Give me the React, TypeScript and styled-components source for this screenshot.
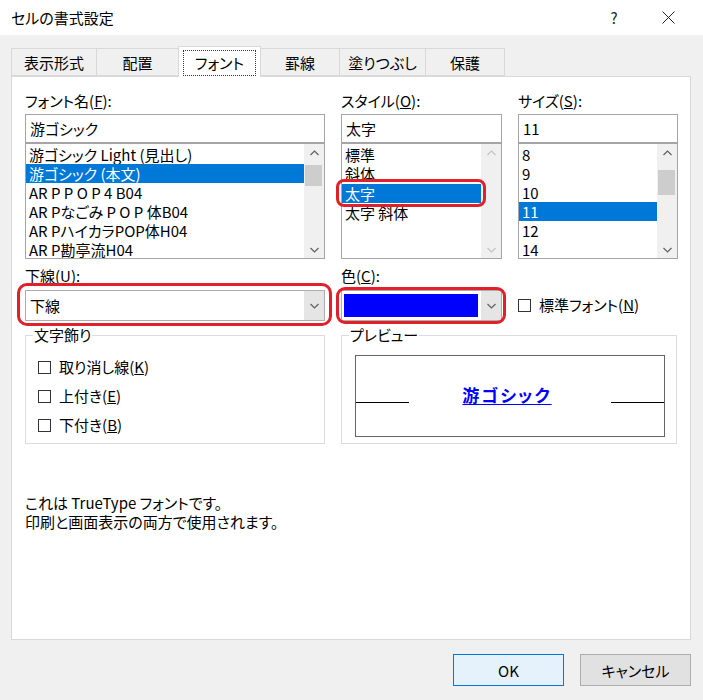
import styled, { createGlobalStyle } from 'styled-components';

const GlobalStyle = createGlobalStyle`
  html, body {
    margin: 0;
    padding: 0;
    background: #f0f0f0;
  }
  body {
    font-family: "Noto Sans CJK JP", "Noto Sans", sans-serif;
    font-feature-settings: "palt";
    font-size: 15px;
    color: #000;
  }
`

const Window = styled.div`
  width: 703px;
  height: 700px;
  display: flex;
  flex-direction: column;
  background: #f0f0f0;
  overflow: hidden;
`

const TitleBar = styled.div`
  height: 35px;
  background: #fff;
  display: flex;
  align-items: center;
  padding: 0 8px 0 11px;
`

const TitleText = styled.div`
  flex: 1;
  font-size: 15px;
  line-height: 20px;
`

const TitleButton = styled.div`
  width: 54px;
  height: 35px;
  display: flex;
  align-items: center;
  justify-content: center;
  font-size: 15px;
  color: #222;
`

const Body = styled.div`
  padding: 11px 12px 0 11px;
  display: flex;
  flex-direction: column;
`

const TabStrip = styled.div`
  display: flex;
  align-items: flex-end;
  height: 30px;
  padding-left: 1px;
`

const Tab = styled.div<{ $w: number; $active?: boolean }>`
  width: ${p => p.$w}px;
  height: ${p => (p.$active ? 31 : 28)}px;
  margin-left: -1px;
  margin-bottom: ${p => (p.$active ? -1 : 0)}px;
  box-sizing: border-box;
  border: 1px solid #d9d9d9;
  border-bottom: ${p => (p.$active ? 'none' : '1px solid #d9d9d9')};
  background: ${p => (p.$active ? '#fff' : '#f0f0f0')};
  position: relative;
  z-index: ${p => (p.$active ? 2 : 1)};
  display: flex;
  align-items: center;
  justify-content: center;
  font-size: 15px;
  line-height: 20px;
  padding-top: ${p => (p.$active ? 0 : 1)}px;
`

const FocusRect = styled.span`
  border: 1px dotted #333;
  padding: 2px 11px;
  margin-top: 2px;
`

const Panel = styled.div`
  height: 564px;
  box-sizing: border-box;
  background: #fff;
  border: 1px solid #d9d9d9;
  padding: 14px 11px 0 13px;
  display: flex;
  flex-direction: column;
`

const FontGrid = styled.div`
  display: grid;
  grid-template-columns: 300px 161px 160px;
  column-gap: 16px;
`

const Column = styled.div`
  display: flex;
  flex-direction: column;
`

const Label = styled.div`
  height: 20px;
  line-height: 20px;
  font-size: 15px;
  margin-bottom: 3px;
  white-space: nowrap;
`

const TextBox = styled.div`
  height: 29px;
  box-sizing: border-box;
  border: 1px solid #a5a5a5;
  padding: 0 4px;
  line-height: 27px;
  font-size: 15px;
`

const ListBox = styled.div`
  height: 116px;
  box-sizing: border-box;
  border: 1px solid #a5a5a5;
  display: flex;
`

const ListItems = styled.div`
  flex: 1;
  padding-top: 1px;
  display: flex;
  flex-direction: column;
`

const ListItem = styled.div<{ $selected?: boolean }>`
  height: 19.3px;
  line-height: 19px;
  padding-left: 3px;
  font-size: 15px;
  white-space: nowrap;
  position: relative;
  background: ${p => (p.$selected ? '#0078d7' : 'transparent')};
  color: ${p => (p.$selected ? '#fff' : '#000')};
`

const ScrollTrack = styled.div`
  width: 20px;
  background: #f0f0f0;
  display: flex;
  flex-direction: column;
`

const ScrollArrow = styled.div`
  height: 17px;
  display: flex;
  align-items: center;
  justify-content: center;
`

const ScrollThumb = styled.div<{ $top: number; $h: number }>`
  margin: ${p => p.$top}px 2px 0 1px;
  height: ${p => p.$h}px;
  background: #cdcdcd;
`

const ScrollSpacer = styled.div`
  flex: 1;
`

const Highlight = styled.div<{ $t: number; $r: number; $b: number; $l: number; $radius: number }>`
  position: absolute;
  top: ${p => p.$t}px;
  right: ${p => p.$r}px;
  bottom: ${p => p.$b}px;
  left: ${p => p.$l}px;
  border: 3px solid #e0202a;
  border-radius: ${p => p.$radius}px;
  pointer-events: none;
  z-index: 5;
`

const SecondGrid = styled.div`
  display: grid;
  grid-template-columns: 300px 161px auto;
  column-gap: 16px;
  margin-top: 7px;
`

const LabelTight = styled(Label)`
  margin-bottom: 4px;
`

const ComboWrap = styled.div`
  position: relative;
`

const Combo = styled.div`
  height: 31px;
  box-sizing: border-box;
  border: 1px solid #adadad;
  background: #fff;
  display: flex;
`

const ComboText = styled.div`
  flex: 1;
  padding-left: 4px;
  line-height: 29px;
  font-size: 15px;
`

const ColorFill = styled.div<{ $color: string }>`
  flex: 1;
  margin: 3px 3px 3px 2px;
  background: ${p => p.$color};
`

const ComboButton = styled.div`
  width: 20px;
  background: #e5e5e5;
  display: flex;
  align-items: center;
  justify-content: center;
`

const CheckRow = styled.div`
  display: flex;
  align-items: center;
  gap: 8px;
  font-size: 15px;
  line-height: 20px;
  white-space: nowrap;
`

const CheckBox = styled.span`
  width: 13px;
  height: 13px;
  box-sizing: border-box;
  border: 1px solid #333;
  background: #fff;
  flex-shrink: 0;
`

const NormalFontCell = styled.div`
  display: flex;
  align-items: flex-end;
  padding-bottom: 6px;
`

const GroupRow = styled.div`
  display: grid;
  grid-template-columns: 300px 336px;
  column-gap: 16px;
  margin-top: 14px;
`

const GroupBox = styled.div`
  position: relative;
  height: 109px;
  box-sizing: border-box;
  border: 1px solid #dcdcdc;
`

const GroupTitle = styled.div`
  position: absolute;
  top: -11px;
  left: 7px;
  padding: 0 1px;
  background: #fff;
  font-size: 15px;
  line-height: 20px;
`

const EffectList = styled.div`
  display: flex;
  flex-direction: column;
  gap: 9px;
  padding: 21px 0 0 12px;
`

const PreviewBox = styled.div`
  margin: 19px 0 0 13px;
  width: 310px;
  height: 82px;
  box-sizing: border-box;
  border: 1px solid #646464;
  display: flex;
  align-items: flex-end;
  padding-bottom: 33px;
`

const PreviewLine = styled.div`
  width: 53px;
  height: 1px;
  background: #000;
`

const PreviewText = styled.div`
  flex: 1;
  text-align: center;
  font-size: 17px;
  line-height: 20px;
  font-weight: 700;
  letter-spacing: 2px;
  color: #0000ff;
  text-decoration: underline;
  text-underline-offset: 2px;
  margin-bottom: -2px;
  padding-right: 6px;
`

const InfoText = styled.div`
  margin-top: 49px;
  font-size: 15px;
  line-height: 19px;
`

const ButtonRow = styled.div`
  display: flex;
  justify-content: flex-end;
  gap: 16px;
  margin-top: 14px;
`

const DialogButton = styled.div<{ $default?: boolean }>`
  width: 111px;
  height: 32px;
  box-sizing: border-box;
  border: 1px solid ${p => (p.$default ? '#0078d7' : '#adadad')};
  background: ${p => (p.$default ? '#e5f1fb' : '#e1e1e1')};
  display: flex;
  align-items: center;
  justify-content: center;
  font-size: 15px;
`

function Chevron({ up, disabled }: { up?: boolean; disabled?: boolean }) {
  return (
    <svg width="9" height="6" viewBox="0 0 9 6">
      <polyline
        points={up ? '0.5,5 4.5,1 8.5,5' : '0.5,1 4.5,5 8.5,1'}
        fill="none"
        stroke={disabled ? '#c4c4c4' : '#606060'}
        strokeWidth="1.2"
      />
    </svg>
  );
}

function ScrollBar({ thumbTop, thumbHeight, disabled }: { thumbTop?: number; thumbHeight?: number; disabled?: boolean }) {
  return (
    <ScrollTrack>
      <ScrollArrow><Chevron up disabled={disabled} /></ScrollArrow>
      {!disabled && <ScrollThumb $top={thumbTop ?? 0} $h={thumbHeight ?? 20} />}
      <ScrollSpacer />
      <ScrollArrow><Chevron disabled={disabled} /></ScrollArrow>
    </ScrollTrack>
  );
}

const fontNames = [
  '游ゴシック Light (見出し)',
  '游ゴシック (本文)',
  'AR P P O P 4 B04',
  'AR Pなごみ P O P 体B04',
  'AR PハイカラPOP体H04',
  'AR P勘亭流H04',
];
const styles = ['標準', '斜体', '太字', '太字 斜体'];
const sizes = ['8', '9', '10', '11', '12', '14'];
const tabs = [
  { name: '表示形式', w: 86 },
  { name: '配置', w: 83 },
  { name: 'フォント', w: 83 },
  { name: '罫線', w: 80 },
  { name: '塗りつぶし', w: 87 },
  { name: '保護', w: 80 },
];

function App() {
  return (
    <Window>
      <GlobalStyle />
      <TitleBar>
        <TitleText>セルの書式設定</TitleText>
        <TitleButton>?</TitleButton>
        <TitleButton>
          <svg width="13" height="13" viewBox="0 0 13 13">
            <path d="M0.5,0.5 L12.5,12.5 M12.5,0.5 L0.5,12.5" stroke="#222" strokeWidth="1" />
          </svg>
        </TitleButton>
      </TitleBar>
      <Body>
        <TabStrip>
          {tabs.map(t => (
            <Tab key={t.name} $w={t.w} $active={t.name === 'フォント'}>
              {t.name === 'フォント' ? <FocusRect>{t.name}</FocusRect> : t.name}
            </Tab>
          ))}
        </TabStrip>
        <Panel>
          <FontGrid>
            <Column>
              <Label>フォント名(<u>F</u>):</Label>
              <TextBox>游ゴシック</TextBox>
              <ListBox>
                <ListItems>
                  {fontNames.map(n => (
                    <ListItem key={n} $selected={n === '游ゴシック (本文)'}>{n}</ListItem>
                  ))}
                </ListItems>
                <ScrollBar thumbTop={4} thumbHeight={21} />
              </ListBox>
            </Column>
            <Column>
              <Label>スタイル(<u>O</u>):</Label>
              <TextBox>太字</TextBox>
              <ListBox>
                <ListItems>
                  {styles.map(s => (
                    <ListItem key={s} $selected={s === '太字'}>
                      {s}
                      {s === '太字' && <Highlight $t={-5} $r={-5} $b={-4} $l={-6} $radius={8} />}
                    </ListItem>
                  ))}
                </ListItems>
                <ScrollBar disabled />
              </ListBox>
            </Column>
            <Column>
              <Label>サイズ(<u>S</u>):</Label>
              <TextBox>11</TextBox>
              <ListBox>
                <ListItems>
                  {sizes.map(s => (
                    <ListItem key={s} $selected={s === '11'}>{s}</ListItem>
                  ))}
                </ListItems>
                <ScrollBar thumbTop={9} thumbHeight={25} />
              </ListBox>
            </Column>
          </FontGrid>

          <SecondGrid>
            <Column>
              <LabelTight>下線(<u>U</u>):</LabelTight>
              <ComboWrap>
                <Combo>
                  <ComboText>下線</ComboText>
                  <ComboButton><Chevron /></ComboButton>
                </Combo>
                <Highlight $t={-7} $r={-7} $b={-5} $l={-8} $radius={10} />
              </ComboWrap>
            </Column>
            <Column>
              <LabelTight>色(<u>C</u>):</LabelTight>
              <ComboWrap>
                <Combo>
                  <ColorFill $color="#0000ff" />
                  <ComboButton><Chevron /></ComboButton>
                </Combo>
                <Highlight $t={-3} $r={-4} $b={-3} $l={-5} $radius={9} />
              </ComboWrap>
            </Column>
            <NormalFontCell>
              <CheckRow>
                <CheckBox />
                <span>標準フォント(<u>N</u>)</span>
              </CheckRow>
            </NormalFontCell>
          </SecondGrid>

          <GroupRow>
            <GroupBox>
              <GroupTitle>文字飾り</GroupTitle>
              <EffectList>
                <CheckRow><CheckBox /><span>取り消し線(<u>K</u>)</span></CheckRow>
                <CheckRow><CheckBox /><span>上付き(<u>E</u>)</span></CheckRow>
                <CheckRow><CheckBox /><span>下付き(<u>B</u>)</span></CheckRow>
              </EffectList>
            </GroupBox>
            <GroupBox>
              <GroupTitle>プレビュー</GroupTitle>
              <PreviewBox>
                <PreviewLine />
                <PreviewText>游ゴシック</PreviewText>
                <PreviewLine />
              </PreviewBox>
            </GroupBox>
          </GroupRow>

          <InfoText>
            これは TrueType フォントです。<br />
            印刷と画面表示の両方で使用されます。
          </InfoText>
        </Panel>
        <ButtonRow>
          <DialogButton $default>OK</DialogButton>
          <DialogButton>キャンセル</DialogButton>
        </ButtonRow>
      </Body>
    </Window>
  );
}

export default App;
